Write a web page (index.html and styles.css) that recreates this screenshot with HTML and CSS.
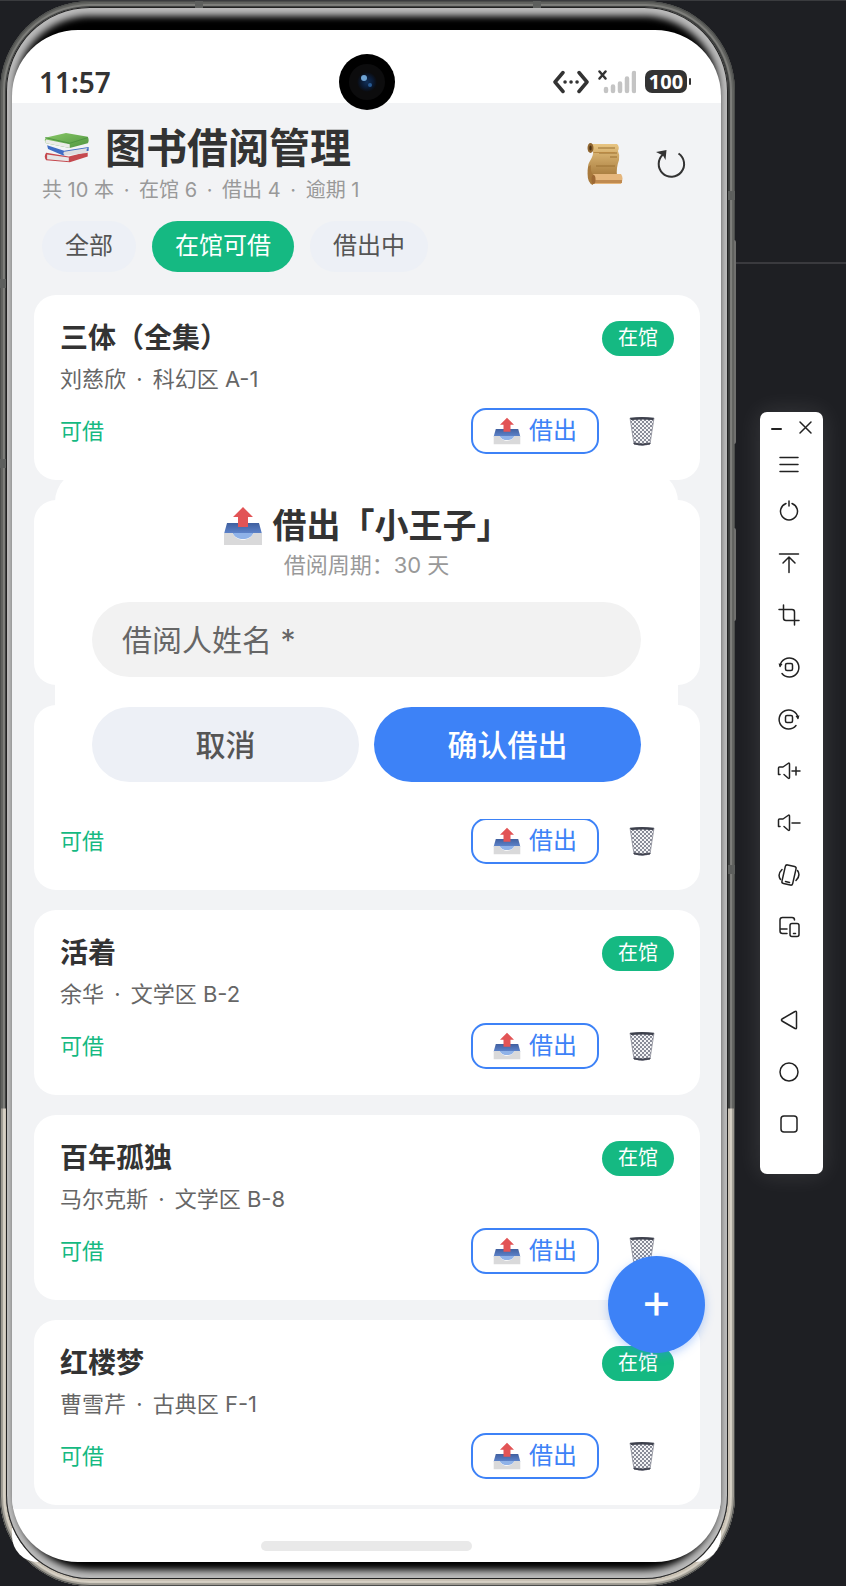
FILE: index.html
```html
<!DOCTYPE html>
<html lang="zh-CN">
<head>
  <meta charset="UTF-8" />
  <meta name="viewport" content="width=device-width, initial-scale=1.0"/>
  <title>图书借阅管理</title>
  <link rel="stylesheet" href="styles.css">
</head>
<body>
  <!-- shared icons -->
  <svg class="sprite" aria-hidden="true">
    <defs>
      <linearGradient id="paper" x1="0" y1="0" x2="0" y2="1">
        <stop offset="0" stop-color="#e8c582"/><stop offset="1" stop-color="#a87c3e"/>
      </linearGradient>
      <linearGradient id="tray-blue" x1="0" y1="0" x2="0" y2="1">
        <stop offset="0" stop-color="#3f5f9f"/><stop offset="1" stop-color="#5f85cc"/>
      </linearGradient>
      <linearGradient id="green" x1="0" y1="0" x2="1" y2="1">
        <stop offset="0" stop-color="#8ac967"/><stop offset="1" stop-color="#4f9440"/>
      </linearGradient>
      <radialGradient id="lens">
        <stop offset="0" stop-color="#11305a"/><stop offset="0.6" stop-color="#0a1a33"/><stop offset="1" stop-color="#0b0b0d"/>
      </radialGradient>
      <pattern id="mesh" width="4" height="4" patternUnits="userSpaceOnUse">
        <path d="M0 0l4 4M4 0l-4 4" stroke="#7c7f8c" stroke-width="0.9"/>
      </pattern>
    </defs>
    <symbol id="i-outbox" viewBox="0 0 40 40">
      <path d="M4 17h32l3 11H1z" fill="url(#tray-blue)"/>
      <path d="M1 27h9c2 9 18 9 20 0h9v12H1z" fill="#d9d9da"/>
      <path d="M10 27h20c-2 8-18 8-20 0z" fill="#8fb2e8"/>
      <path d="M20 1l10 10h-5v10H15V11h-5z" fill="#e25456"/>
    </symbol>
    <symbol id="i-trash" viewBox="0 0 26 30">
      <path d="M1 2l4 26q8 3 16 0l4-26z" fill="#f4f4f6"/>
      <path d="M1 2l4 26q8 3 16 0l4-26z" fill="url(#mesh)" stroke="#8b8d98" stroke-width="0.8"/>
      <path d="M1 2q12-2 24 0l-1 2q-11-1-22 0z" fill="#3d404c"/>
      <path d="M5 27q8 2 16 0v1q-8 2-16 0z" fill="#3d404c" stroke="#3d404c" stroke-width="0.8"/>
    </symbol>
    <symbol id="i-books" viewBox="-2 -1 50 36">
      <path d="M2 22l24 4 20-5v5L27 32 2 30q-3-4 0-8z" fill="#c5484e"/>
      <path d="M3 24l23 3v4L3 29z" fill="#e6e6e6"/>
      <path d="M3 14l18 6 26-4v4l-27 5L4 18z" fill="#3f6dc4"/>
      <path d="M21 21l25-4q-3 3 1 5l-25 3q-3-2-1-4z" fill="#dedee0"/>
      <path d="M2 6L23 1l23 4q2 4 0 7l-19 5L2 12q-3-3 0-6z" fill="url(#green)"/>
      <path d="M2 8l25 5v4L2 12q-2-2 0-4z" fill="#ebebe8"/>
      <path d="M1 6l26 6 19-6" fill="none" stroke="#4c9440" stroke-width="1"/>
    </symbol>
    <symbol id="i-scroll" viewBox="0 0 36 42">
      <path d="M5 1h25q3 3 1 7 2 4 1 9-3 8-2 16H5q-5 0-4-9c0-6 6-9 5-16z" fill="url(#paper)"/>
      <path d="M11 5h17M23 14h7M12 10h18M9 23h19" stroke="#9a7033" stroke-width="1"/>
      <path d="M6 9h22v1H7z" fill="#b98a45"/>
      <ellipse cx="3.500" cy="5" rx="3" ry="5" fill="#8f6530"/>
      <ellipse cx="3.500" cy="5" rx="1.200" ry="2.500" fill="#4b3012"/>
      <path d="M6 31h28q3 4 0 10H6q-4-4 0-10z" fill="#e5b67c"/>
      <path d="M8 37h27v3H8z" fill="#c08a50"/>
      <path d="M1 24q-2 16 5 18l1-10q-4-2-3-10z" fill="#a8793c"/>
      <ellipse cx="6.500" cy="36.500" rx="2" ry="4.500" fill="#9d6834"/>
    </symbol>
  </svg>

  <main class="phone">
    <i class="band band-top-a"></i><i class="band band-top-b"></i>
    <i class="band band-left-a"></i><i class="band band-left-b"></i>
    <i class="band band-right-a"></i><i class="band band-right-b"></i>
    <i class="side-key key-volume"></i><i class="side-key key-power"></i>
    <div class="bezel">
      <div class="screen">
        <div class="status">
          <span class="time">11:57</span>
          <svg class="camera" viewBox="0 0 56 56" aria-hidden="true">
            <circle cx="28" cy="28" r="28" fill="#000"/>
            <circle cx="28" cy="28" r="18" fill="#0c0c0d"/>
            <circle cx="28" cy="28" r="10" fill="url(#lens)"/>
            <circle cx="25" cy="24" r="3" fill="#6ea3d2"/>
            <circle cx="31" cy="31" r="2" fill="#285a92"/>
          </svg>
          <div class="status-icons">
            <svg width="36" height="24" viewBox="0 0 36 24" fill="none" stroke="#333" stroke-width="3.500" stroke-linecap="round" stroke-linejoin="round">
              <path d="M10 2.500L2 12l8 9.500M26 2.500l8 9.500-8 9.500"/>
              <path d="M12 12h.1M18 12h.1M24 12h.1"/>
            </svg>
            <svg width="38" height="24" viewBox="0 0 38 24" fill="none" stroke-linecap="round">
              <path d="M1.500 1.500l6 7M7.500 1.500l-6 7" stroke="#333" stroke-width="2.500"/>
              <path d="M8 19v2M15 16.500v4.500M22 13.500v7.500M29 8.500v12.500M36 3v18" stroke="#c4c4c4" stroke-width="4.500"/>
            </svg>
            <span class="battery">100</span>
          </div>
        </div>

        <div class="content">
          <header class="header">
            <div>
              <h1><svg class="books"><use href="#i-books"/></svg>图书借阅管理</h1>
              <p class="stats">共 10 本 <span class="sep">·</span> 在馆 6 <span class="sep">·</span> 借出 4 <span class="sep">·</span> 逾期 1</p>
            </div>
            <div class="header-actions">
              <button class="icon-btn" aria-label="借阅记录"><svg width="36" height="42"><use href="#i-scroll"/></svg></button>
              <button class="icon-btn" aria-label="刷新">
                <svg width="30" height="30" viewBox="0 0 30 30" fill="none" stroke="#333" stroke-width="2">
                  <path d="M22.500 4.500A12.700 12.700 0 1 1 7 5.500"/>
                  <path d="M0 3L10.500 1 9.500 11 7 6.500z" fill="#333" stroke="none"/>
                </svg>
              </button>
            </div>
          </header>

          <nav class="chips">
            <button class="chip">全部</button>
            <button class="chip active">在馆可借</button>
            <button class="chip">借出中</button>
          </nav>

          <section class="list" id="bookList"></section>

          <form class="sheet">
            <h2><svg class="sheet-icon"><use href="#i-outbox"/></svg>借出「小王子」</h2>
            <p>借阅周期：30 天</p>
            <input type="text" id="borrower" aria-label="借阅人姓名" placeholder="借阅人姓名 *" />
            <div class="sheet-actions">
              <button type="button" class="cancel">取消</button>
              <button type="button" class="confirm">确认借出</button>
            </div>
          </form>

          <button class="fab" aria-label="添加图书">+</button>
        </div>

        <div class="home-bar"><span></span></div>
      </div>
    </div>
  </main>

  <aside class="side">
    <div class="toolbar">
      <div class="window-btns">
        <button aria-label="最小化"><svg width="16" height="16"><path d="M3 9h9" stroke-width="2"/></svg></button>
        <button aria-label="关闭"><svg width="16" height="16"><path d="M2 2l11 11M13 2L2 13"/></svg></button>
      </div>
      <button class="tool menu" aria-label="菜单"><svg viewBox="0 0 24 24"><path d="M3 4.500h18M3 11.500h18M3 18.500h18"/></svg></button>
      <button class="tool" aria-label="电源"><svg viewBox="0 0 24 24"><path d="M9 4.500a8.500 8.500 0 1 0 6 0M12 2v5"/></svg></button>
      <button class="tool" aria-label="返回顶部"><svg viewBox="0 0 24 24"><path d="M2.500 3h19M12 21.500V6M6 12l6-6 6 6"/></svg></button>
      <button class="tool" aria-label="截图"><svg viewBox="0 0 24 24"><path d="M2 6.500h13q2.500 0 2.500 2.500v13M6.500 2v13q0 2.500 2.500 2.500h13"/></svg></button>
      <button class="tool" aria-label="向左旋转"><svg viewBox="0 0 24 24"><path d="M5 18.500A9.500 9.500 0 1 0 3 11"/><path d="M1.500 8.500l4 .5L3 12.500z" fill="#222" stroke="none"/><rect x="8.500" y="8.500" width="7" height="7" rx="1.500"/></svg></button>
      <button class="tool" aria-label="向右旋转"><svg viewBox="0 0 24 24"><path d="M19 18.500A9.500 9.500 0 1 1 21 11"/><path d="M22.500 8.500l-4 .5 2.500 3.500z" fill="#222" stroke="none"/><rect x="8.500" y="8.500" width="7" height="7" rx="1.500"/></svg></button>
      <button class="tool" aria-label="增大音量"><svg viewBox="0 0 24 24"><path d="M3 15.500H1.500V9q0-1 1-1H6l5-3.500q1.500-1 1.500.5v13.500q0 1.500-1.500.5l-4-3.500M15 12h8M19 8v8"/></svg></button>
      <button class="tool" aria-label="减小音量"><svg viewBox="0 0 24 24"><path d="M3 15.500H1.500V9q0-1 1-1H6l5-3.500q1.500-1 1.500.5v13.500q0 1.500-1.500.5l-4-3.500M15 12h8"/></svg></button>
      <button class="tool" aria-label="摇一摇"><svg viewBox="0 0 24 24"><rect x="6.500" y="2.500" width="11" height="19" rx="2" transform="rotate(13 12 12)"/><path d="M8.500 18.500l4 1M5 6.500q-5 5-1.500 10M19 17.500q5-5 1.500-10"/></svg></button>
      <button class="tool" aria-label="多设备"><svg viewBox="0 0 24 24"><path d="M10 18.500H5.500q-2.500 0-2.500-2.500V5q0-2.500 2.500-2.500H15q2.500 0 2.500 2.500M3 14h7"/><rect x="13" y="8.500" width="9" height="13" rx="2"/><path d="M16.500 18.500h2"/></svg></button>
      <div class="tool-nav">
        <button class="tool" aria-label="返回"><svg viewBox="0 0 24 24"><path d="M18 3.500q1.500-1 1.500 1v15q0 2-1.500 1L5 13q-1-1 0-2z"/></svg></button>
        <button class="tool" aria-label="主屏幕"><svg viewBox="0 0 24 24"><circle cx="12" cy="12" r="9"/></svg></button>
        <button class="tool" aria-label="最近任务"><svg viewBox="0 0 24 24"><rect x="4" y="4" width="16" height="16" rx="3"/></svg></button>
      </div>
    </div>
  </aside>

  <script>
  // rows behind the dialog only need their visible part
  const books = [
    { title: "三体（全集）", author: "刘慈欣", shelf: "科幻区 A-1" },
    { covered: true },
    { },
    { title: "活着", author: "余华", shelf: "文学区 B-2" },
    { title: "百年孤独", author: "马尔克斯", shelf: "文学区 B-8" },
    { title: "红楼梦", author: "曹雪芹", shelf: "古典区 F-1" }
  ];

  document.getElementById("bookList").innerHTML = books.map(b => `
    <article class="card">
      ${b.title ? `
      <div class="card-top"><h3>${b.title}</h3><span class="badge">在馆</span></div>
      <p class="info">${b.author} <span class="sep">·</span> ${b.shelf}</p>` : ""}
      ${b.covered ? "" : `
      <div class="card-bottom">
        <span class="state">可借</span>
        <button class="lend"><svg><use href="#i-outbox"/></svg>借出</button>
        <button class="delete" aria-label="删除"><svg><use href="#i-trash"/></svg></button>
      </div>`}
    </article>
  `).join("");
  </script>
</body>
</html>
```

FILE: styles.css
```css
:root {
  --green: #15b982;
  --blue: #3d82f7;
  --bg: #f2f3f5;
  --chip: #edf0f6;
  --text: #333;
  --text-mid: #666;
  --text-light: #999;
  --dark: #1e1f23;
}

* {
  margin: 0;
  padding: 0;
  box-sizing: border-box;
}

body {
  display: flex;
  align-items: flex-start;
  min-height: 100vh;
  background-color: var(--dark);
  border-top: 1px solid #3a3b3e;
  font-family: Inter, "Noto Sans CJK SC", sans-serif;
  line-height: 1.2;
  color: var(--text);
}

button {
  border: none;
  background: none;
  font-family: inherit;
  line-height: inherit;
  cursor: pointer;
}

svg {
  display: block;
}

.sprite {
  position: absolute;
  width: 0;
  height: 0;
}

/* phone frame */
.phone {
  flex: 1;
  position: relative;
  z-index: 1;
  padding: 6px 7px 7px 6px;
  border-radius: 90px;
  background: linear-gradient(to bottom, #3a3c3b 0, #3a3c3b 1107px, #c9c1b3 1108px);
  box-shadow: inset 0 0 0 1px #4c4e4c, inset 0 0 1px 3px rgba(20, 20, 20, 0.3), inset 0 0 1px 5px rgba(240, 238, 230, 0.4);
}

.phone::before {
  content: "";
  position: absolute;
  z-index: -2;
  left: 12px;
  right: 14px;
  bottom: 24px;
  height: 60px;
  border-radius: 0 0 26px 26px;
  background: #fff;
}

.bezel {
  padding: 23px 7px 17px 6px;
  border-radius: 84px;
  background: #000;
  box-shadow: inset 0 0 0 1px #222, inset 0 0 7px 9px #bcbcbc;
}

.screen {
  border-radius: 66px;
  overflow: hidden;
  background: #fff;
}

.band {
  position: absolute;
  background: #5d5f5d;
}

.band-top-a, .band-top-b {
  top: 0;
  width: 8px;
  height: 7px;
}

.band-top-a { left: 195px; }
.band-top-b { right: 194px; }

.band-left-a, .band-left-b {
  left: 0;
  width: 6px;
  height: 9px;
}

.band-left-a { top: 278px; }
.band-left-b { top: 458px; }

.band-right-a, .band-right-b {
  right: 0;
  width: 7px;
  height: 9px;
}

.band-right-a { top: 190px; }
.band-right-b { top: 864px; }

.side-key {
  position: absolute;
  right: -1px;
  width: 2px;
  border-radius: 0 2px 2px 0;
  background: #70706e;
}

.key-volume {
  top: 239px;
  height: 204px;
}

.key-power {
  top: 527px;
  height: 93px;
}

/* status bar */
.status {
  position: relative;
  display: flex;
  justify-content: space-between;
  align-items: center;
  height: 73px;
  padding: 30px 29px 0 27px;
  font-family: "Noto Sans", sans-serif;
}

.time {
  font-size: 28px;
  font-weight: 600;
  line-height: 32px;
}

.camera {
  position: absolute;
  z-index: 1;
  top: 24px;
  left: 50%;
  width: 56px;
  height: 56px;
  margin-left: -28px;
}

.status-icons {
  display: flex;
  align-items: center;
  gap: 9px;
}

.battery {
  position: relative;
  width: 42px;
  margin-right: 5px;
  border-radius: 7px;
  background: #333;
  color: #fff;
  font-size: 20px;
  font-weight: 700;
  line-height: 23px;
  text-align: center;
}

.battery::after {
  content: "";
  position: absolute;
  right: -4px;
  top: 8px;
  width: 2px;
  height: 7px;
  border-radius: 1px;
  background: #333;
}

/* page */
.content {
  position: relative;
  background: var(--bg);
}

.header {
  display: flex;
  justify-content: space-between;
  align-items: center;
  padding: 21px 24px 0 30px;
}

h1 {
  display: flex;
  align-items: center;
  gap: 15px;
  font-size: 41px;
  line-height: 48px;
}

.books {
  width: 48px;
  height: 34px;
}

.stats {
  margin-top: 4px;
  color: var(--text-light);
  font-size: 20px;
  line-height: 28px;
}

.sep {
  margin: 0 4px;
}

.header-actions {
  display: flex;
  gap: 14px;
}

.icon-btn {
  display: flex;
  justify-content: center;
  align-items: center;
  width: 52px;
  height: 52px;
}

.chips {
  display: flex;
  gap: 16px;
  padding: 17px 30px 23px;
}

.chip {
  height: 51px;
  padding: 0 23px;
  border-radius: 26px;
  background: var(--chip);
  color: #555;
  font-size: 24px;
}

.chip.active {
  background: var(--green);
  color: #fff;
}

.list {
  display: flex;
  flex-direction: column;
  gap: 20px;
  padding: 0 21px 4px 22px;
}

.card {
  display: flex;
  flex-direction: column;
  min-height: 185px;
  padding: 26px;
  border-radius: 22px;
  background: #fff;
}

.card-top {
  display: flex;
  justify-content: space-between;
  align-items: center;
}

h3 {
  font-size: 28px;
  line-height: 35px;
}

.badge {
  padding: 0 16px;
  border-radius: 18px;
  background: var(--green);
  color: #fff;
  font-size: 20px;
  line-height: 35px;
}

.info {
  margin-top: 8px;
  color: var(--text-mid);
  font-size: 22px;
  line-height: 30px;
}

.card-bottom {
  display: flex;
  align-items: center;
  margin-top: auto;
}

.state {
  flex: 1;
  color: var(--green);
  font-size: 22px;
}

.lend {
  display: flex;
  align-items: center;
  gap: 8px;
  height: 46px;
  padding: 0 20px;
  border: 2px solid var(--blue);
  border-radius: 15px;
  color: var(--blue);
  font-size: 24px;
}

.lend svg {
  width: 28px;
  height: 28px;
}

.delete {
  display: flex;
  justify-content: center;
  width: 65px;
  margin-left: 10px;
}

.delete svg {
  width: 26px;
  height: 30px;
}

/* lend dialog */
.sheet {
  position: absolute;
  top: 367px;
  left: 43px;
  right: 43px;
  padding: 34px 37px 37px;
  border-radius: 32px 32px 0 0;
  background: #fff;
  text-align: center;
}

.sheet h2 {
  display: flex;
  justify-content: center;
  align-items: center;
  gap: 10px;
  font-size: 34px;
  line-height: 44px;
}

.sheet-icon {
  width: 40px;
  height: 40px;
}

.sheet p {
  margin-bottom: 20px;
  color: var(--text-light);
  font-size: 22px;
  line-height: 34px;
}

.sheet input {
  width: 100%;
  height: 75px;
  padding: 0 30px;
  border: none;
  border-radius: 38px;
  background: #f2f2f2;
  color: var(--text);
  font-family: inherit;
  font-size: 30px;
  line-height: 36px;
}

.sheet input::placeholder {
  color: var(--text-mid);
}

.sheet-actions {
  display: flex;
  gap: 15px;
  margin-top: 30px;
}

.sheet-actions button {
  flex: 1;
  height: 75px;
  border-radius: 38px;
  font-size: 30px;
  font-weight: 500;
}

.cancel {
  background: var(--chip);
  color: #555;
}

.confirm {
  background: var(--blue);
  color: #fff;
}

.fab {
  position: absolute;
  right: 16px;
  bottom: 156px;
  width: 97px;
  height: 97px;
  padding-bottom: 8px;
  border-radius: 50%;
  background: var(--blue);
  box-shadow: 0 3px 10px rgba(61, 130, 247, 0.35);
  color: #fff;
  font-size: 48px;
  font-weight: 400;
}

.home-bar {
  display: flex;
  justify-content: center;
  align-items: flex-end;
  height: 53px;
  padding-bottom: 11px;
}

.home-bar span {
  width: 211px;
  height: 10px;
  border-radius: 5px;
  background: #e9e9e9;
}

/* emulator toolbar */
.side {
  width: 111px;
  padding: 149px 0 0 25px;
  background: linear-gradient(#3a3a3e, #3a3a3e) 0 261px / 100% 2px no-repeat;
}

.toolbar {
  width: 63px;
  margin-top: 262px;
  padding-bottom: 24px;
  border-radius: 7px;
  background: #fff;
  box-shadow: 0 0 24px rgba(255, 255, 255, 0.12);
}

.toolbar svg {
  fill: none;
  stroke: #222;
  stroke-width: 1.5;
  stroke-linecap: round;
  stroke-linejoin: round;
}

.window-btns {
  display: flex;
  justify-content: center;
  align-items: center;
  gap: 13px;
  height: 32px;
}

.tool {
  display: flex;
  justify-content: center;
  align-items: center;
  width: 100%;
  height: 52px;
  padding-right: 5px;
}

.tool svg {
  width: 24px;
  height: 24px;
}

.tool.menu {
  height: 41px;
}

.tool-nav {
  margin-top: 41px;
}
```
